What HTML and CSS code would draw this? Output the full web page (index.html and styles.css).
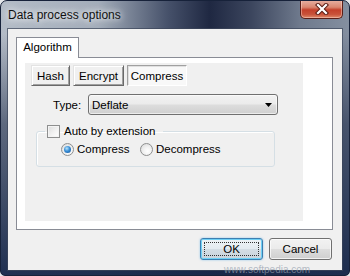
FILE: index.html
```html
<!DOCTYPE html>
<html lang="en">

<head>
  <meta charset="UTF-8">
  <title>Data process options</title>
  <link rel="stylesheet" href="styles.css">
</head>

<body>
  <div class="window">
    <div class="titlebar">
      <span class="title">Data process options</span>
      <span class="close">
        <svg width="14" height="12" viewBox="0 0 14 12">
          <path d="M3 2 L11 10 M11 2 L3 10" stroke="#5b1d14" stroke-width="4.2" stroke-linecap="square"/>
          <path d="M3 2 L11 10 M11 2 L3 10" stroke="#fff" stroke-width="2.2" stroke-linecap="square"/>
        </svg>
      </span>
    </div>

    <div class="client">
      <div class="tabs"><span class="tab">Algorithm</span></div>

      <div class="tabpanel">
        <div class="inner">
          <div class="toggles">
            <span class="tbtn hash">Hash</span>
            <span class="tbtn encrypt">Encrypt</span>
            <span class="tbtn compress down">Compress</span>
          </div>

          <div class="typerow">
            <span class="lbl">Type:</span>
            <div class="combo">
              <span>Deflate</span>
              <svg width="7" height="4" viewBox="0 0 7 4"><path d="M0 0 H7 L3.5 4 Z" fill="#000"/></svg>
            </div>
          </div>

          <fieldset class="group">
            <legend><span class="check"></span>Auto by extension</legend>
            <div class="radios">
              <label class="opt first"><span class="radio on"></span>Compress</label>
              <label class="opt"><span class="radio"></span>Decompress</label>
            </div>
          </fieldset>
        </div>
      </div>

      <div class="buttons">
        <span class="btn default"><span class="focus">OK</span></span>
        <span class="btn">Cancel</span>
      </div>
    </div>

    <span class="mark-url">www.softpedia.com</span>
  </div>
</body>

</html>
```

FILE: styles.css
```css
*,
*::after,
*::before {
  box-sizing: border-box;
}

html {
  background: #e6e8eb;
}

body {
  margin: 0;
  font-family: "Liberation Sans", Arial, sans-serif;
  font-size: 11.5px;
  color: #000;
}

/* window frame */
.window {
  position: relative;
  width: 350px;
  height: 276px;
  border: 1px solid #17223a;
  border-radius: 7px 7px 5px 5px;
  background:
    linear-gradient(180deg, rgba(20, 32, 60, 0) 0, rgba(20, 32, 60, 0) 12%, rgba(22, 36, 66, .55) 45%, rgba(24, 40, 74, .95) 100%),
    linear-gradient(90deg, #b4bcc7 0%, #a3adba 28%, #46516a 48%, #1f2842 60%, #3c465e 72%, #6f7a8d 86%, #848fa0 100%);
  display: flex;
  flex-direction: column;
  overflow: hidden;
}

.titlebar {
  height: 28px;
  display: flex;
  align-items: flex-start;
  padding-left: 7px;
}

.title {
  font-size: 12px;
  line-height: 28px;
  color: #111;
  text-shadow: 0 0 6px #fff, 0 0 10px rgba(255, 255, 255, .8);
}

.close {
  margin-left: auto;
  margin-right: 6px;
  margin-top: -1px;
  width: 43px;
  height: 19px;
  border: 1px solid #5a1f18;
  border-top: none;
  border-radius: 0 0 5px 5px;
  background: linear-gradient(180deg, #e8b2a4 0%, #d98670 40%, #c4402a 55%, #c9533a 80%, #de8a6a 100%);
  box-shadow: inset 0 0 0 1px rgba(255, 220, 210, .45);
  display: flex;
  align-items: center;
  justify-content: center;
}

/* client area */
.client {
  margin: 0 7px;
  height: 241px;
  background: #f0f0f0;
  box-shadow: 0 0 0 1px rgba(60, 70, 90, .7);
  padding: 8px 0 0 8px;
}

.tabs {
  height: 20px;
}

.tab {
  position: relative;
  z-index: 1;
  display: inline-block;
  width: 63px;
  height: 21px;
  border: 1px solid #898c95;
  border-bottom: none;
  background: #fff;
  text-align: center;
  line-height: 19px;
}

.tabpanel {
  width: 317px;
  height: 173px;
  border: 1px solid #898c95;
  background: #fff;
  padding: 5px 0 0 8px;
}

.inner {
  width: 278px;
  height: 158px;
  background: #f0f0f0;
  padding-top: 2px;
}

.toggles {
  display: flex;
  gap: 3px;
  margin-left: 6px;
}

.tbtn {
  height: 21px;
  border: 1px solid;
  border-color: #e3e3e3 #696969 #696969 #e3e3e3;
  box-shadow: inset 1px 1px #fff, inset -1px -1px #a0a0a0;
  background: #f0f0f0;
  display: flex;
  align-items: center;
  justify-content: center;
}

.hash { width: 39px; }
.encrypt { width: 51px; }
.compress { width: 60px; }

.tbtn.down {
  border-color: #a0a0a0 #fff #fff #a0a0a0;
  box-shadow: inset 1px 1px #e0e0e0;
  background: #f8f8f8;
}

.typerow {
  display: flex;
  align-items: center;
  margin-top: 8px;
  padding-left: 28px;
}

.lbl {
  width: 35px;
}

.combo {
  width: 190px;
  height: 21px;
  border: 1px solid #707070;
  border-radius: 3px;
  background: linear-gradient(180deg, #f2f2f2 0%, #ebebeb 48%, #dddddd 52%, #cfcfcf 100%);
  box-shadow: inset 0 0 0 1px rgba(255, 255, 255, .6);
  display: flex;
  align-items: center;
  justify-content: space-between;
  padding: 0 5px 0 3px;
}

/* group box */
.group {
  width: 239px;
  margin: 9px 0 0 11px;
  padding: 0 0 9px 8px;
  border: 1px solid #d5dfe5;
  border-radius: 3px;
  box-shadow: inset 1px 1px #fff;
}

.group legend {
  display: flex;
  align-items: center;
  gap: 4px;
  height: 14px;
  padding: 0 8px 0 2px;
}

.check {
  width: 13px;
  height: 13px;
  border: 1px solid #8e8f8f;
  background: linear-gradient(135deg, #dcdcdc 0%, #f4f4f4 60%, #fff 100%);
  box-shadow: inset 0 0 0 1px #f4f4f4;
}

.radios {
  display: flex;
  align-items: center;
  height: 16px;
  margin: 3px 0 0 16px;
}

.opt {
  display: flex;
  align-items: center;
  gap: 3px;
}

.opt.first {
  width: 79px;
}

.radio {
  position: relative;
  width: 13px;
  height: 13px;
  border: 1px solid #8e8f8f;
  border-radius: 50%;
  background: radial-gradient(circle at 60% 65%, #fff 0%, #f2f2f2 40%, #d6d6d6 100%);
}

.radio.on::after {
  content: "";
  position: absolute;
  left: 2px;
  top: 2px;
  width: 7px;
  height: 7px;
  border-radius: 50%;
  background: radial-gradient(circle at 40% 35%, #b8e4fb 0%, #3a8fd6 45%, #0f4f98 100%);
}

/* dialog buttons */
.buttons {
  display: flex;
  justify-content: flex-end;
  gap: 6px;
  margin-top: 8px;
  padding-right: 10px;
}

.btn {
  width: 63px;
  height: 22px;
  border: 1px solid #707070;
  border-radius: 3px;
  background: linear-gradient(180deg, #f2f2f2 0%, #ebebeb 48%, #dddddd 52%, #cfcfcf 100%);
  box-shadow: inset 0 0 0 1px rgba(255, 255, 255, .7);
  display: flex;
  align-items: center;
  justify-content: center;
}

.btn.default {
  border-color: #3c7fb1;
  box-shadow: inset 0 0 0 1px #6fd0f5, 0 0 2px rgba(60, 160, 230, .6);
  background: linear-gradient(180deg, #eef3f6 0%, #e4ebf0 48%, #d4dde4 52%, #c8d3dc 100%);
  padding: 3px;
}

.btn .focus {
  flex: 1;
  align-self: stretch;
  border: 1px dotted #333;
  display: flex;
  align-items: center;
  justify-content: center;
}

/* watermark */
.mark-url {
  position: absolute;
  left: 223px;
  top: 263px;
  font-size: 10px;
  color: rgba(150, 160, 175, .7);
}
```
